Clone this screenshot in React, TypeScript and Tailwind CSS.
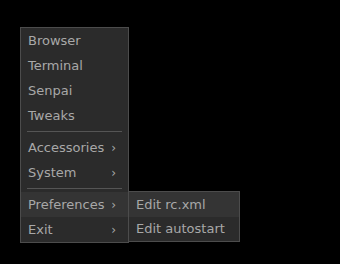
import React from "react";

type Entry = { label: string; sub?: boolean; active?: boolean } | "sep";

const mainItems: Entry[] = [
  { label: "Browser" },
  { label: "Terminal" },
  { label: "Senpai" },
  { label: "Tweaks" },
  "sep",
  { label: "Accessories", sub: true },
  { label: "System", sub: true },
  "sep",
  { label: "Preferences", sub: true, active: true },
  { label: "Exit", sub: true },
];

const subItems = [
  { label: "Edit rc.xml", active: true },
  { label: "Edit autostart" },
];

function Row({ label, sub, active }: { label: string; sub?: boolean; active?: boolean }) {
  return (
    <div
      className={`flex h-[25px] items-center justify-between pl-[7px] pr-[12px] last:h-[24px] ${
        active ? "bg-[#343434]" : ""
      }`}
    >
      <span>{label}</span>
      {sub && <span className="text-[12px]">›</span>}
    </div>
  );
}

export default function App() {
  return (
    <div
      className="h-[264px] w-[340px] bg-black pl-[20px] pt-[27px] text-[13px] text-[#a8a8a8]"
      style={{ fontFamily: '"DejaVu Sans", sans-serif' }}
    >
      <div className="relative w-[109px] border border-[#4c4c4c] bg-[#2b2b2b]">
        {mainItems.map((item, i) =>
          item === "sep" ? (
            <div key={i} className="flex h-[7px] items-center px-[6px]">
              <div className="h-px w-full bg-[#555555]" />
            </div>
          ) : (
            <Row key={i} {...item} />
          )
        )}

        <div className="absolute left-[107px] top-[163px] w-[112px] border border-[#4c4c4c] bg-[#2b2b2b]">
          {subItems.map((s, i) => (
            <Row key={i} {...s} />
          ))}
        </div>
      </div>
    </div>
  );
}
